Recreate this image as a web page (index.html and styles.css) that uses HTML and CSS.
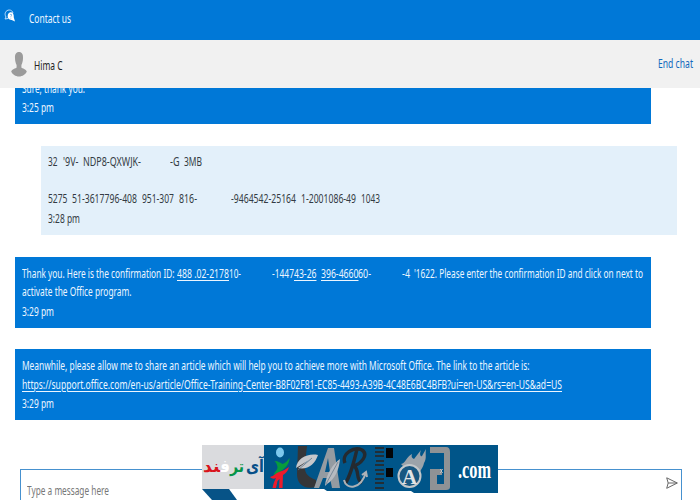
FILE: index.html
```html
<!DOCTYPE html>
<html lang="en">
<head>
<meta charset="utf-8">
<title>Contact us</title>
<link rel="stylesheet" href="styles.css">
</head>
<body>
<div class="app">
  <header class="topbar">
    <svg class="chat-icon" viewBox="0 0 12 14">
      <path d="M4 9.5 1 10l1-2C-.2 4.600 2 1 5.200 1c2 0 3.300 1.200 3.800 3" fill="none" stroke="#b8dcff" stroke-width="1"/>
      <path d="M6.300 3.200C8.700 3 10 4.800 9.800 8.500L11 12.500 7.700 10.900C4.800 11 3.500 9.300 3.700 7 3.800 4.900 4.800 3.400 6.300 3.200Z" fill="#fff"/>
      <path d="M6 6c.2-1 1.700-1 1.700 0 0 .8-.9.900-.9 1.800M6.800 8.700v.8" fill="none" stroke="#0078d7" stroke-width=".5"/>
    </svg>
    <span class="seg" data-w="42">Contact us</span>
  </header>
  <div class="agent">
    <svg class="avatar" viewBox="0 0 16 25">
      <path d="M8 0c3 0 4.200 2.500 4 6 0 3-.8 5.500-1.600 7v2.400c1 1.200 4.600 1.400 5.400 4.100C14.700 22.300 11.500 24.500 8 24.500S1.300 22.300.2 19.500c.8-2.700 4.400-2.900 5.400-4.100V13C4.800 11.500 4 9 4 6 3.800 2.500 5 0 8 0Z" fill="#9b9b9b"/>
    </svg>
    <span class="seg name" data-w="28.5">Hima C</span>
    <span class="seg end" data-w="35">End chat</span>
  </div>
  <main class="chat">
    <section class="msg agent-msg first">
      <div class="line"><span class="seg" data-w="63">Sure, thank you.</span></div>
      <div class="line time"><span class="seg" data-w="32">3:25 pm</span></div>
    </section>
    <section class="msg user-msg">
      <div class="line"><span class="seg" data-w="9.500">32</span><span class="seg" data-gap="5" data-w="15.500">'9V-</span><span class="seg" data-gap="5" data-w="58">NDP8-QXWJK-</span><span class="seg" data-gap="28.500" data-w="9.500">-G</span><span class="seg" data-gap="5" data-w="18">3MB</span></div>
      <div class="line"></div>
      <div class="line"><span class="seg" data-w="19.500">5275</span><span class="seg" data-gap="4.500" data-w="65">51-3617796-408</span><span class="seg" data-gap="4.500" data-w="32">951-307</span><span class="seg" data-gap="5" data-w="18">816-</span><span class="seg" data-gap="34" data-w="65">-9464542-25164</span><span class="seg" data-gap="5" data-w="55">1-2001086-49</span><span class="seg" data-gap="5" data-w="19">1043</span></div>
      <div class="line time"><span class="seg" data-w="32">3:28 pm</span></div>
    </section>
    <section class="msg agent-msg">
      <div class="line"><span class="seg" data-w="152.500">Thank you. Here is the confirmation ID:</span><span class="seg link" data-gap="2.500" data-w="52">488 .02-2178</span><span class="seg" data-w="12">10-</span><span class="seg" data-gap="31" data-w="22">-1447</span><span class="seg link" data-w="22.500">43-26</span><span class="seg link" data-gap="4" data-w="37.500">396-4660</span><span class="seg" data-w="13">60-</span><span class="seg" data-gap="31" data-w="8">-4</span><span class="seg" data-gap="4" data-w="229">'1622. Please enter the confirmation ID and click on next to</span></div>
      <div class="line"><span class="seg" data-w="109.500">activate the Office program.</span></div>
      <div class="line time"><span class="seg" data-w="32">3:29 pm</span></div>
    </section>
    <section class="msg agent-msg">
      <div class="line"><span class="seg" data-w="507.500">Meanwhile, please allow me to share an article which will help you to achieve more with Microsoft Office. The link to the article is:</span></div>
      <div class="line"><span class="seg link" data-w="540">https://support.office.com/en-us/article/Office-Training-Center-B8F02F81-EC85-4493-A39B-4C48E6BC4BFB?ui=en-US&amp;rs=en-US&amp;ad=US</span></div>
      <div class="line time"><span class="seg" data-w="32">3:29 pm</span></div>
    </section>
  </main>
  <footer class="composer">
    <span class="seg placeholder" data-w="82">Type a message here</span>
    <svg class="send" viewBox="0 0 12 12"><path d="M.7.8 11.300 6 .7 11.300 2.200 6ZM2.200 6h9" fill="none" stroke="#666" stroke-width="1"/></svg>
  </footer>
  <svg class="watermark" viewBox="202 445 297 55">
    <path d="M202 489h27l8 11h-25Z" fill="#075387"/>
    <path d="M202 445h62v44h-62z" fill="#dadbde"/>
    <path d="M264 445h234v48h-84l-3-2h-84l-3-2h-60Z" fill="#005589"/>
    <g class="persian" direction="rtl">
      <text x="264" y="472" fill="#064f88" textLength="18" lengthAdjust="spacingAndGlyphs">آی</text>
      <text x="244" y="472" fill="#079447" textLength="14" lengthAdjust="spacingAndGlyphs">تر</text>
      <text x="230" y="472" fill="#fff" textLength="10" lengthAdjust="spacingAndGlyphs">ف‍</text>
      <text x="220" y="472" fill="#d9141c" textLength="17" lengthAdjust="spacingAndGlyphs">‍ند</text>
    </g>
    <ellipse cx="280" cy="452.500" rx="4" ry="5" fill="#7dc8ed"/>
    <path d="M289.500 458c0 5-3 9-7 12-3 2-5 4-9 5 1-3 3-4 4-7 0-3-1-5-3-7 4 0 6 2 8 3 3-1 5-3 7-6Z" fill="#079c3d"/>
    <path d="M270 477c4-1 6-4 9-5 4-1 7-3 10-5-1 4-3 6-6 8l-.5 13H279l.5-9-2 2-1.500 7h-3.500c1-5 2-7 3.500-10-2 1-4 1-6-1Z" fill="#ed1b2b"/>
    <path d="M298 446h9l-2 17c-1 9 1 13 11 17v7c-12 3-19-3-19-13Z" fill="#353638"/>
    <path d="M296 468c1-10 12-15 22-13-3 9-10 15-20 13l11-8Z" fill="#c5c7ca"/>
    <path d="M298 470 312 458" stroke="#55748a" stroke-width=".8"/>
    <path d="M314 488 328 448h6l6 40h-8l-2-10h-7l-4 10ZM325 472h5l-2-14Z" fill="#949ba1" fill-rule="evenodd"/>
    <path d="M325 486c1-12 8-22 15-27-1 11-5 20-13 25" fill="#b7bbc0"/>
    <path d="M326 484 338 462" stroke="#697b8b" stroke-width=".8"/>
    <path d="M345 463c-4-9 9-17 17-13 7 5-1 14-9 16m4-17c-3 13-6 26-12 35m9-18c6 4 1 13 8 17" fill="none" stroke="#242a30" stroke-width="3.400"/>
    <path d="M344 480c2 10 17 10 22-8m-4 3 4-3 1 5" fill="none" stroke="#adb2b7" stroke-width="2"/>
    <path d="M375 448h9m-9 4h9m-9 4h9m-8 5h8m-9 4h9m-9 5h9m-8 4h8m-9 5h9m-9 4h9m-9 5h9" stroke="#222e36" stroke-width="1.800"/>
    <path d="M386 448h7v10h-7zM386 468h7v9h-7z" fill="#020508"/>
    <path d="M401 464c5-1 5-7 11-10-1 3 0 4 2 5l7-9c-2 5 0 7 1 6l4-7c-1 6 1 9-2 14-1 6-5 7-5 15l-7-8-8-3Z" fill="#9ca3aa"/>
    <circle cx="409.500" cy="476" r="11" fill="#175781" stroke="#c3c7ca" stroke-width="2"/>
    <text x="409.500" y="484" text-anchor="middle" class="badge">A</text>
    <path d="M430 447h16q4 0 4 5v35q0 3-4 3h-16v-21h12v6h-5v9h7v-31h-14Z" fill="#8f9295"/>
    <path d="m440 469 2 2-2 2m3-4-2 2 2 2" fill="none" stroke="#ccd0d3" stroke-width=".7"/>
    <text x="458" y="478" textLength="33" lengthAdjust="spacingAndGlyphs" class="domain">.com</text>
  </svg>
</div>
<script src="fit.js"></script>
</body>
</html>
```
FILE: styles.css
```css
* { box-sizing: border-box; }
body { margin: 0; background: #fff; font: 13px/18.5px "Noto Sans", "Open Sans", sans-serif; color: #333b43; }
.app { position: relative; width: 700px; height: 500px; overflow: hidden; display: flex; flex-direction: column; }
.seg { display: inline-block; white-space: pre; flex: none; }
.topbar { height: 39.5px; flex: none; background: #0078d7; color: #ecf6ff; display: flex; align-items: center; padding: 0 0 3px 4px; }
.chat-icon { width: 12px; height: 14px; margin: -4px 13px 0 0; }
.agent { height: 48.5px; flex: none; background: #f1f1f1; color: #222; display: flex; align-items: center; padding: 3px 7px 0 11px; }
.avatar { width: 16px; height: 25px; margin: -2px 7px 0 0; }
.name { margin-top: -1px; }
.agent .end { margin: -4px 0 0 auto; color: #1068bd; }
.chat { flex: none; height: 381px; overflow: hidden; padding-left: 15px; }
.msg { width: 636px; height: 71px; padding: 7px 7px 0; margin-bottom: 21.5px; }
.agent-msg { background: #0078d7; color: #ecf6ff; }
.first { height: 52px; margin-top: -16px; margin-bottom: 22px; padding-top: 6.5px; }
.user-msg { height: 89px; margin-left: 26px; margin-bottom: 21.5px; padding-top: 6px; background: #e3f0fa; }
.line { height: 18.5px; display: flex; }
.time { margin-top: 1px; }
.link { text-decoration: underline; text-underline-offset: 1.5px; text-decoration-thickness: 1px; }
.composer { flex: none; width: 662px; height: 50px; margin-left: 20px; border: 1px solid #4691cf; border-bottom: 0; display: flex; justify-content: space-between; padding: 0 3px 0 6px; background: #fff; }
.placeholder { margin-top: 11px; color: #777; }
.send { width: 12px; height: 12px; margin-top: 7px; }
.watermark { position: absolute; left: 202px; top: 445px; width: 297px; height: 55px; }
.persian { font: bold 17px "DejaVu Sans", sans-serif; }
.badge { font: bold 21px "Liberation Serif", serif; fill: #e2e4e5; }
.domain { font: bold 25px "Liberation Serif", serif; fill: #fff; }
```
FILE: fit.js
```js
// Condense each text run to its column width.
document.querySelectorAll(".seg").forEach((seg) => {
  const target = Number(seg.dataset.w);
  const natural = seg.getBoundingClientRect().width;
  seg.style.width = target + "px";
  if (seg.dataset.gap) seg.style.marginLeft = seg.dataset.gap + "px";
  const inner = document.createElement("span");
  inner.textContent = seg.textContent;
  inner.style.display = "inline-block";
  inner.style.transformOrigin = "0 50%";
  inner.style.transform = `scaleX(${target / natural})`;
  if (seg.classList.contains("link")) {
    inner.className = "link";
    seg.classList.remove("link");
  }
  seg.replaceChildren(inner);
});
```
